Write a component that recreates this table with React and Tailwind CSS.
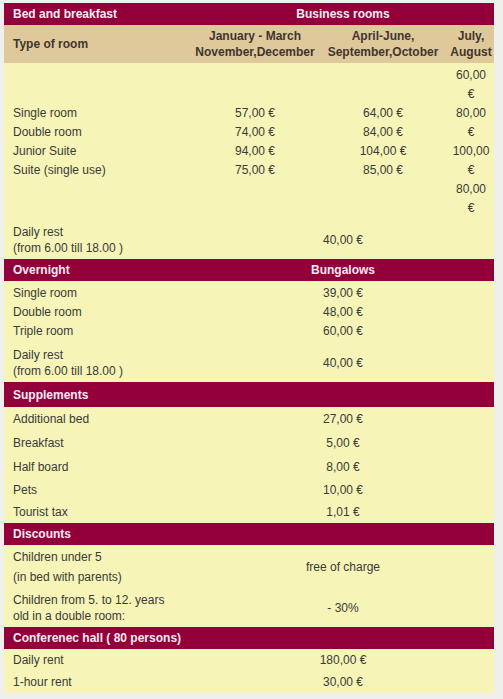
export default function App() {
  const hdr = "bg-[#930039] text-[#fdeaf5] font-bold";
  const body = "bg-[#f6f4b6]";
  return (
    <div className="w-[503px] min-h-[699px] bg-[#efefeb] pt-[3px] pl-[4px] font-['Liberation_Sans','Arial',sans-serif] text-[12px] text-[#3a3a3a]">
      <table className="w-[490px] table-fixed border-collapse">
        <colgroup>
          <col className="w-[188px]" />
          <col className="w-[126px]" />
          <col className="w-[130px]" />
          <col className="w-[46px]" />
        </colgroup>
        <tbody>
          <tr className={`h-[22px] ${hdr}`}>
            <td className="p-0 pl-[9px]">Bed and breakfast</td>
            <td colSpan={3} className="p-0 text-center">Business rooms</td>
          </tr>
          <tr className="h-[38px] bg-[#dfc99a] font-bold text-[#3f3530] leading-[16px]">
            <td className="p-0 pl-[9px]">Type of room</td>
            <td className="p-0 text-center">January - March<br />November,December</td>
            <td className="p-0 text-center">April-June,<br />September,October</td>
            <td className="p-0 text-center">July,<br />August</td>
          </tr>
          <tr className={`h-[157px] ${body} leading-[19px]`}>
            <td className="p-0 pl-[9px] align-middle">Single room<br />Double room<br />Junior Suite<br />Suite (single use)</td>
            <td className="p-0 text-center align-middle">57,00 €<br />74,00 €<br />94,00 €<br />75,00 €</td>
            <td className="p-0 text-center align-middle">64,00 €<br />84,00 €<br />104,00 €<br />85,00 €</td>
            <td className="p-0 text-center align-middle">60,00<br />€<br />80,00<br />€<br />100,00<br />€<br />80,00<br />€</td>
          </tr>
          <tr className={`h-[39px] ${body} leading-[16px]`}>
            <td className="p-0 pl-[9px]">Daily rest<br />(from 6.00 till 18.00 )</td>
            <td colSpan={3} className="p-0 text-center">40,00 €</td>
          </tr>
          <tr className={`h-[22px] ${hdr}`}>
            <td className="p-0 pl-[9px]">Overnight</td>
            <td colSpan={3} className="p-0 text-center">Bungalows</td>
          </tr>
          <tr className={`h-[62px] ${body} leading-[19px]`}>
            <td className="p-0 pl-[9px]">Single room<br />Double room<br />Triple room</td>
            <td colSpan={3} className="p-0 text-center">39,00 €<br />48,00 €<br />60,00 €</td>
          </tr>
          <tr className={`h-[39px] ${body} leading-[16px]`}>
            <td className="p-0 pl-[9px]">Daily rest<br />(from 6.00 till 18.00 )</td>
            <td colSpan={3} className="p-0 text-center">40,00 €</td>
          </tr>
          <tr className={`h-[25px] ${hdr}`}>
            <td colSpan={4} className="p-0 pl-[9px]">Supplements</td>
          </tr>
          {[
            ["Additional bed", "27,00 €", "h-[23px]"],
            ["Breakfast", "5,00 €", "h-[26px]"],
            ["Half board", "8,00 €", "h-[22px]"],
            ["Pets", "10,00 €", "h-[23px]"],
            ["Tourist tax", "1,01 €", "h-[22px]"],
          ].map(([a, b, h]) => (
            <tr key={a} className={`${h} ${body}`}>
              <td className="p-0 pl-[9px]">{a}</td>
              <td colSpan={3} className="p-0 text-center">{b}</td>
            </tr>
          ))}
          <tr className={`h-[22px] ${hdr}`}>
            <td colSpan={4} className="p-0 pl-[9px]">Discounts</td>
          </tr>
          <tr className={`h-[43px] ${body} leading-[20px]`}>
            <td className="p-0 pl-[9px]">Children under 5<br />(in bed with parents)</td>
            <td colSpan={3} className="p-0 text-center">free of charge</td>
          </tr>
          <tr className={`h-[39px] ${body} leading-[16px]`}>
            <td className="p-0 pl-[9px]">Children from 5. to 12. years<br />old in a double room:</td>
            <td colSpan={3} className="p-0 text-center">- 30%</td>
          </tr>
          <tr className={`h-[22px] ${hdr}`}>
            <td colSpan={4} className="p-0 pl-[9px]">Conferenec hall ( 80 persons)</td>
          </tr>
          <tr className={`h-[22px] ${body}`}>
            <td className="p-0 pl-[9px]">Daily rent</td>
            <td colSpan={3} className="p-0 text-center">180,00 €</td>
          </tr>
          <tr className={`h-[22px] ${body}`}>
            <td className="p-0 pl-[9px]">1-hour rent</td>
            <td colSpan={3} className="p-0 text-center">30,00 €</td>
          </tr>
        </tbody>
      </table>
    </div>
  );
}
